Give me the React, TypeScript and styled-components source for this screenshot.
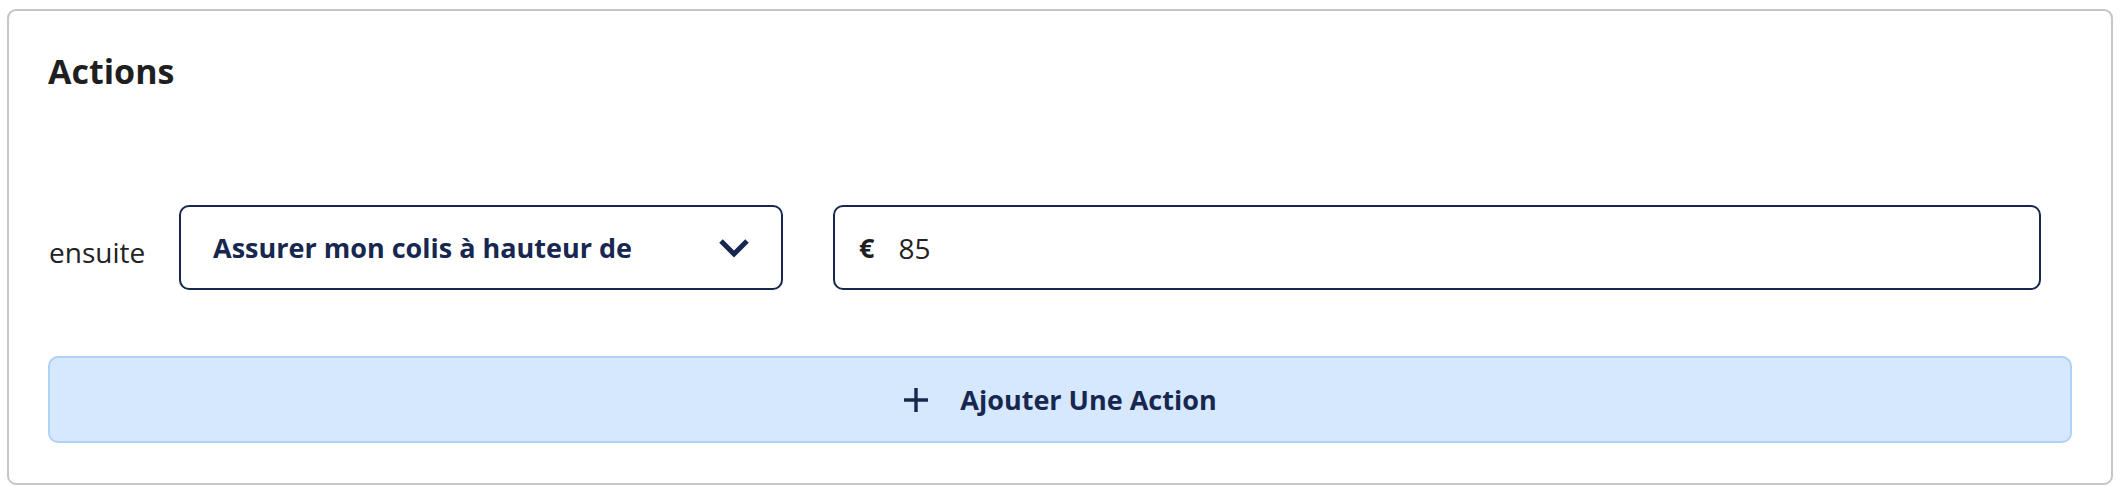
import React from 'react';
import styled, { createGlobalStyle } from 'styled-components';

const GlobalStyle = createGlobalStyle`
  body {
    margin: 0;
    background: #fff;
    font-family: "Open Sans", "Noto Sans", sans-serif;
  }
`;

const NAVY = '#172750';

const Page = styled.div`
  padding: 9px 13px 0 7px;
`;

const Card = styled.section`
  border: 2px solid #c6c6c6;
  border-radius: 9px;
  padding: 40px 39px 40px 39px;
  background: #fff;
`;

const Title = styled.h2`
  margin: 0 0 114px;
  font-size: 34px;
  line-height: 40px;
  font-weight: 700;
  color: #1f1f1f;
`;

const ActionRow = styled.div`
  display: flex;
  align-items: center;
  padding-right: 31px;
`;

const RowLabel = styled.span`
  width: 130px;
  flex-shrink: 0;
  padding: 9px 0 0 1px;
  font-size: 28px;
  color: #222;
`;

const SelectBox = styled.button`
  width: 604px;
  height: 85px;
  flex-shrink: 0;
  display: flex;
  align-items: center;
  justify-content: space-between;
  padding: 0 31px 0 32px;
  border: 2px solid ${NAVY};
  border-radius: 10px;
  background: #fff;
  font-family: inherit;
  font-size: 27px;
  font-weight: 700;
  color: ${NAVY};
  cursor: pointer;
`;

const AmountField = styled.label`
  flex: 1;
  height: 85px;
  margin-left: 50px;
  display: flex;
  align-items: center;
  gap: 24px;
  padding: 0 24px;
  border: 2px solid ${NAVY};
  border-radius: 10px;
  box-sizing: border-box;
`;

const Currency = styled.span`
  font-size: 27px;
  font-weight: 700;
  color: #1f1f1f;
`;

const AmountInput = styled.input`
  flex: 1;
  border: none;
  outline: none;
  padding: 0;
  background: transparent;
  font-family: inherit;
  font-size: 28px;
  color: #222;
`;

const AddButton = styled.button`
  width: 100%;
  height: 87px;
  margin-top: 66px;
  display: flex;
  align-items: center;
  justify-content: center;
  gap: 31px;
  border: 2px solid #aed2f6;
  border-radius: 10px;
  background: #d6e8fd;
  font-family: inherit;
  font-size: 27px;
  font-weight: 700;
  color: ${NAVY};
  cursor: pointer;
`;

const Chevron = () => (
  <svg width="32" height="20" viewBox="0 0 32 20" aria-hidden="true">
    <path d="M3 3 L16 16 L29 3" fill="none" stroke={NAVY} strokeWidth="5" strokeLinejoin="miter" />
  </svg>
);

const Plus = () => (
  <svg width="26" height="26" viewBox="0 0 26 26" aria-hidden="true">
    <path d="M13 1 V25 M1 13 H25" fill="none" stroke={NAVY} strokeWidth="3.4" />
  </svg>
);

export default function App() {
  const [amount, setAmount] = React.useState('85');

  return (
    <>
      <GlobalStyle />
      <Page>
        <Card>
          <Title>Actions</Title>
          <ActionRow>
            <RowLabel>ensuite</RowLabel>
            <SelectBox type="button">
              <span>Assurer mon colis à hauteur de</span>
              <Chevron />
            </SelectBox>
            <AmountField>
              <Currency>€</Currency>
              <AmountInput value={amount} onChange={(e) => setAmount(e.target.value)} />
            </AmountField>
          </ActionRow>
          <AddButton type="button">
            <Plus />
            <span>Ajouter Une Action</span>
          </AddButton>
        </Card>
      </Page>
    </>
  );
}
